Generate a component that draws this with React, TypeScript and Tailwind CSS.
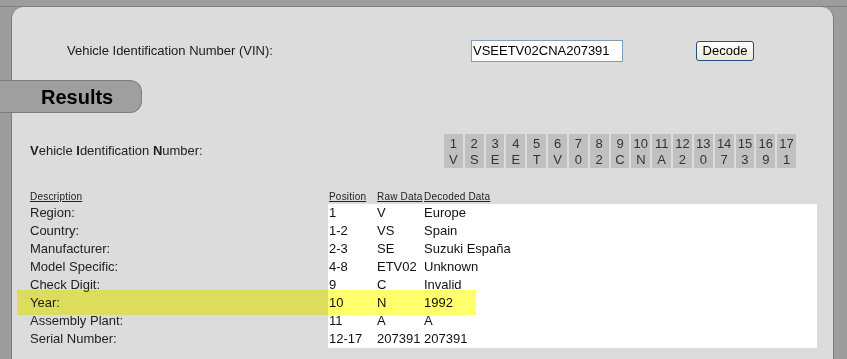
import React from 'react';

const vin = 'VSEETV02CNA207391';

const rows = [
  { label: 'Region:', pos: '1', raw: 'V', decoded: 'Europe' },
  { label: 'Country:', pos: '1-2', raw: 'VS', decoded: 'Spain' },
  { label: 'Manufacturer:', pos: '2-3', raw: 'SE', decoded: 'Suzuki España' },
  { label: 'Model Specific:', pos: '4-8', raw: 'ETV02', decoded: 'Unknown' },
  { label: 'Check Digit:', pos: '9', raw: 'C', decoded: 'Invalid' },
  { label: 'Year:', pos: '10', raw: 'N', decoded: '1992' },
  { label: 'Assembly Plant:', pos: '11', raw: 'A', decoded: 'A' },
  { label: 'Serial Number:', pos: '12-17', raw: '207391', decoded: '207391' },
];

export default function App() {
  return (
    <div className="relative w-[847px] h-[359px] overflow-hidden bg-[#9d9d9d] pt-[6px] font-['Liberation_Sans',Arial,sans-serif] text-[#1a1a1a]">
      <div className="h-[1px] w-full bg-[#7d7d7d]" />
      <div className="flow-root ml-[11px] w-[823px] h-[352px] bg-[#dcdcdc] border-l border-r border-[#7d7d7d] rounded-t-[12px] pt-[33px]">
        {/* VIN entry */}
        <div className="flex items-center h-[21px] pl-[55px]">
          <span className="w-[404px] text-[13px] leading-[16px]">Vehicle Identification Number (VIN):</span>
          <div className="w-[152px] h-[22px] bg-white border border-[#7f9db9] pl-[1px] text-[13px] leading-[20px] text-black">
            {vin}
          </div>
          <button className="ml-[73px] w-[58px] h-[20px] rounded-[3px] border border-[#1d4f82] bg-gradient-to-b from-white to-[#ece9d8] text-[13px] leading-[16px] text-black">
            Decode
          </button>
        </div>

        {/* Results tab */}
        <div className="relative -ml-[12px] mt-[19px] w-[142px] h-[33px] bg-[#9f9f9f] border-t border-b border-r border-[#7d7d7d] rounded-r-[12px] pl-[41px] flex items-center">
          <span className="text-[20px] font-bold leading-[22px] text-black">Results</span>
        </div>

        {/* VIN breakdown */}
        <div className="flex items-center mt-[21px] pl-[18px]">
          <span className="w-[414px] text-[13px] leading-[16px] text-[#222]">
            <b>V</b>ehicle <b>I</b>dentification <b>N</b>umber:
          </span>
          <div className="grid grid-cols-[repeat(17,minmax(0,1fr))] gap-[2px] w-[352px]">
            {vin.split('').map((ch, i) => (
              <div key={i} className="h-[34px] bg-[#c0c0c0] pt-[2px] text-center text-[13px] leading-[16px] text-[#333]">
                <div>{i + 1}</div>
                <div>{ch}</div>
              </div>
            ))}
          </div>
        </div>

        {/* Decoded table */}
        <div className="mt-[21px] pl-[18px]">
          <div className="flex h-[15px] text-[10px] leading-[15px] underline text-[#222] tracking-[0.2px]">
            <span className="w-[298px]">Description</span>
            <span className="w-[48px] pl-[1px]">Position</span>
            <span className="w-[47px] pl-[1px]">Raw Data</span>
            <span className="pl-[1px]">Decoded Data</span>
          </div>
          <div className="flex text-[13px] leading-[18px]">
            <div className="w-[298px] text-[#222]">
              {rows.map((r) => (
                <div key={r.label} className="h-[18px]">{r.label}</div>
              ))}
            </div>
            <div className="w-[489px] bg-white text-[#111]">
              {rows.map((r) => (
                <div key={r.label} className="grid grid-cols-[48px_47px_1fr] h-[18px]">
                  <span className="pl-[1px]">{r.pos}</span>
                  <span className="pl-[1px]">{r.raw}</span>
                  <span className="pl-[1px]">{r.decoded}</span>
                </div>
              ))}
            </div>
          </div>
        </div>
      </div>

      {/* highlighter mark over the Year row */}
      <div className="absolute left-[17px] top-[290px] w-[459px] h-[25px] bg-[#ffff6c] mix-blend-multiply" />
    </div>
  );
}
